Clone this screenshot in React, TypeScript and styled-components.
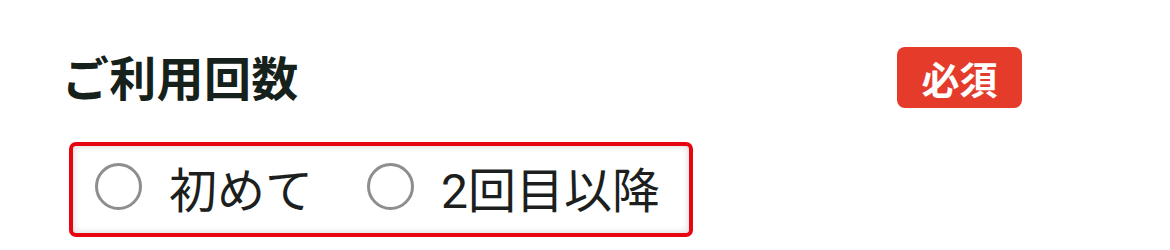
import { createGlobalStyle } from "styled-components";
import styled from "styled-components";

const GlobalStyle = createGlobalStyle`
  body {
    margin: 0;
    background: #ffffff;
    font-family: Roboto, "Noto Sans CJK JP", sans-serif;
  }
`;

const Section = styled.div`
  width: 960px;
  padding: 47px 0 0 62px;
`;

const HeaderRow = styled.div`
  display: flex;
  flex-direction: row;
  align-items: center;
  justify-content: space-between;
  height: 61px;
`;

const Title = styled.h2`
  margin: 0 0 4px 0;
  font-size: 47px;
  font-weight: bold;
  color: #17211b;
  letter-spacing: 0.3px;
`;

const Badge = styled.span`
  display: flex;
  align-items: center;
  justify-content: center;
  width: 125px;
  height: 61px;
  border-radius: 8px;
  background-color: #e43b2b;
  color: #ffffff;
  font-size: 38px;
  font-weight: bold;
`;

const RadioGroup = styled.div`
  box-sizing: border-box;
  display: flex;
  flex-direction: row;
  align-items: center;
  gap: 54px;
  width: 624px;
  height: 95px;
  margin: 34px 0 0 7px;
  padding: 0 22px 6px 22px;
  border: 4px solid #e8050f;
  border-radius: 7px;
  box-shadow: inset 0 0 7px rgba(0, 0, 0, 0.18);
`;

const Option = styled.label`
  display: flex;
  flex-direction: row;
  align-items: center;
  gap: 27px;
  font-size: 48px;
  color: #1c1f1d;
  cursor: pointer;
`;

const Circle = styled.input`
  appearance: none;
  box-sizing: border-box;
  width: 47px;
  height: 47px;
  margin: 0;
  border: 3px solid #8e8e8e;
  border-radius: 50%;
  background: #ffffff;
`;

function App() {
  return (
    <>
      <GlobalStyle />
      <Section>
        <HeaderRow>
          <Title>ご利用回数</Title>
          <Badge>必須</Badge>
        </HeaderRow>
        <RadioGroup>
          <Option>
            <Circle type="radio" name="count" value="first" />
            初めて
          </Option>
          <Option>
            <Circle type="radio" name="count" value="repeat" />
            2回目以降
          </Option>
        </RadioGroup>
      </Section>
    </>
  );
}

export default App;
